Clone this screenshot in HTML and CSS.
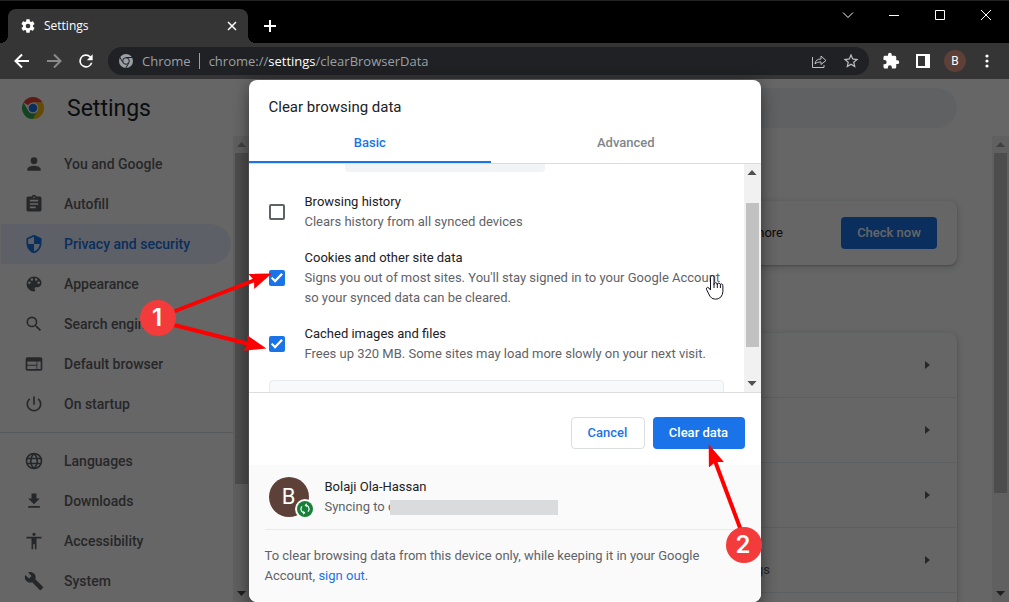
FILE: index.html
```
<!DOCTYPE html>
<html lang="en">
<head>
  <meta charset="UTF-8">
  <meta name="viewport" content="width=device-width, initial-scale=1.0">
  <title>Settings</title>
  <link rel="stylesheet" href="styles.css">
</head>
<body>
  <header class="tabstrip">
    <div class="tab">
      <svg class="icon16" viewBox="0 0 24 24"><path d="M19.43 12.98c.04-.32.07-.64.07-.98s-.03-.66-.07-.98l2.11-1.65c.19-.15.24-.42.12-.64l-2-3.46c-.12-.22-.39-.3-.61-.22l-2.49 1c-.52-.4-1.08-.73-1.69-.98l-.38-2.65A.49.49 0 0 0 14 2h-4c-.25 0-.46.18-.49.42l-.38 2.65c-.61.25-1.17.59-1.69.98l-2.49-1c-.23-.09-.49 0-.61.22l-2 3.46c-.13.22-.07.49.12.64l2.11 1.65c-.04.32-.07.65-.07.98s.03.66.07.98l-2.11 1.65c-.19.15-.24.42-.12.64l2 3.46c.12.22.39.3.61.22l2.49-1c.52.4 1.08.73 1.69.98l.38 2.65c.03.24.24.42.49.42h4c.25 0 .46-.18.49-.42l.38-2.65c.61-.25 1.17-.59 1.69-.98l2.49 1c.23.09.49 0 .61-.22l2-3.46c.12-.22.07-.49-.12-.64l-2.11-1.65zM12 15.5a3.5 3.5 0 1 1 0-7 3.5 3.5 0 0 1 0 7z"/></svg>
      <span class="tab-title">Settings</span>
      <button class="tab-close" aria-label="Close tab"><svg width="10" height="10" viewBox="0 0 10 10"><path d="M1 1l8 8M9 1L1 9"/></svg></button>
    </div>
    <button class="new-tab" aria-label="New tab"><svg width="12" height="12" viewBox="0 0 12 12"><path class="line2" d="M6 0v12M0 6h12"/></svg></button>
    <div class="win-buttons">
      <button aria-label="Search tabs"><svg width="12" height="12" viewBox="0 0 12 12"><path class="line1" d="M1 3.5l5 5 5-5"/></svg></button>
      <button aria-label="Minimize"><svg width="10" height="10" viewBox="0 0 10 10"><path class="line1" d="M0 5.5h10"/></svg></button>
      <button aria-label="Maximize"><svg width="10" height="10" viewBox="0 0 10 10"><path class="line1" d="M.5.5h9v9h-9z"/></svg></button>
      <button aria-label="Close"><svg width="10" height="10" viewBox="0 0 10 10"><path class="line1" d="M0 0l10 10M10 0L0 10"/></svg></button>
    </div>
  </header>

  <nav class="toolbar">
    <button aria-label="Back"><svg width="20" height="20" viewBox="0 0 20 20"><path class="line2" d="M17 10H4M10 3.5L3.5 10l6.5 6.5"/></svg></button>
    <button class="disabled" aria-label="Forward"><svg width="20" height="20" viewBox="0 0 20 20"><path class="line2" d="M3 10h13M10 3.5l6.5 6.5-6.5 6.5"/></svg></button>
    <button aria-label="Reload"><svg width="20" height="20" viewBox="0 0 24 24"><path d="M17.65 6.35A8 8 0 1 0 19.73 14h-2.08A6 6 0 1 1 12 6c1.66 0 3.14.69 4.22 1.78L13 11h7V4l-2.35 2.35z"/></svg></button>
    <div class="omnibox">
      <svg class="site-icon" viewBox="0 0 16 16"><circle cx="8" cy="8" r="7"/><path class="cut" d="M8 4.5h7M5 9.7L1.6 3.9M11 9.7L7.5 15.5"/><circle class="ring" cx="8" cy="8" r="3.3"/></svg>
      <span class="scheme">Chrome</span>
      <span class="url">chrome://<b>settings</b>/clearBrowserData</span>
      <button aria-label="Share"><svg width="16" height="16" viewBox="0 0 16 16"><path class="line1" d="M1.5 4v10.5h11.500V12M4 11c.3-3.600 2.500-5 6-5V3l5 4.500-5 4V9C7 9 5.300 9.500 4 11z"/></svg></button>
      <button aria-label="Bookmark"><svg width="18" height="18" viewBox="0 0 24 24"><path d="M22 9.24l-7.19-.62L12 2 9.19 8.63 2 9.24l5.46 4.73L5.82 21 12 17.27 18.18 21l-1.63-7.03L22 9.24zM12 15.4l-3.76 2.27 1-4.28-3.32-2.88 4.38-.38L12 6.1l1.71 4.04 4.38.38-3.32 2.88 1 4.28L12 15.4z"/></svg></button>
    </div>
    <button aria-label="Extensions"><svg width="18" height="18" viewBox="0 0 24 24"><path d="M20.5 11H19V7a2 2 0 0 0-2-2h-4V3.5a2.5 2.5 0 0 0-5 0V5H4c-1.1 0-2 .9-2 2v3.8h1.5a2.7 2.7 0 0 1 0 5.4H2V20c0 1.1.9 2 2 2h3.8v-1.5a2.7 2.7 0 0 1 5.4 0V22H17a2 2 0 0 0 2-2v-4h1.5a2.5 2.5 0 0 0 0-5z"/></svg></button>
    <button aria-label="Side panel"><svg width="14" height="14" viewBox="0 0 14 14"><path d="M0 0h14v14H0zM2 2v10h7V2z" fill-rule="evenodd"/></svg></button>
    <button aria-label="Profile"><span class="profile">B</span></button>
    <button aria-label="Menu"><svg width="4" height="14" viewBox="0 0 4 14"><circle cx="2" cy="2" r="1.6"/><circle cx="2" cy="7" r="1.6"/><circle cx="2" cy="12" r="1.6"/></svg></button>
  </nav>

  <div class="page">
    <div class="page-header">
      <svg class="logo" viewBox="0 0 24 24">
        <path fill="#ea4335" d="M12 12L2.470 6.500A11 11 0 0 1 21.530 6.500H12z"/>
        <path fill="#fbbc04" d="M12 6.500h9.530A11 11 0 0 1 12 23l4.760-8.250z"/>
        <path fill="#34a853" d="M2.470 6.500A11 11 0 0 0 12 23l4.760-8.250-9.520 0z"/>
        <circle cx="12" cy="12" r="5.5" fill="#fff"/><circle cx="12" cy="12" r="4.3" fill="#1a73e8"/>
      </svg>
      <h1>Settings</h1>
      <input class="search" type="search" aria-label="Search settings">
    </div>

    <div class="columns">
      <nav class="sidebar">
        <a href="#"><svg viewBox="0 0 24 24"><path d="M12 12a4 4 0 1 0 0-8 4 4 0 0 0 0 8zm0 2c-2.67 0-8 1.34-8 4v2h16v-2c0-2.66-5.33-4-8-4z"/></svg>You and Google</a>
        <a href="#"><svg viewBox="0 0 24 24"><path d="M19 3h-4.18a3 3 0 0 0-5.64 0H5a2 2 0 0 0-2 2v14c0 1.1.9 2 2 2h14a2 2 0 0 0 2-2V5a2 2 0 0 0-2-2zm-7 0a1 1 0 1 1 0 2 1 1 0 0 1 0-2zm2 14H7v-2h7v2zm3-4H7v-2h10v2zm0-4H7V7h10v2z"/></svg>Autofill</a>
        <a href="#" class="selected"><svg viewBox="0 0 24 24"><path d="M12 1L3 5v6c0 5.55 3.84 10.74 9 12 5.16-1.26 9-6.45 9-12V5l-9-4zm0 10.99h7c-.53 4.12-3.28 7.79-7 8.94V12H5V6.3l7-3.11v8.8z"/></svg>Privacy and security</a>
        <a href="#"><svg viewBox="0 0 24 24"><path d="M12 3a9 9 0 0 0 0 18 1.5 1.5 0 0 0 1.11-2.51A1.49 1.49 0 0 1 14.23 16H16a5 5 0 0 0 5-5c0-4.42-4.03-8-9-8zm-5.5 9a1.5 1.5 0 1 1 0-3 1.5 1.5 0 0 1 0 3zm3-4a1.5 1.5 0 1 1 0-3 1.5 1.5 0 0 1 0 3zm5 0a1.5 1.5 0 1 1 0-3 1.5 1.5 0 0 1 0 3zm3 4a1.5 1.5 0 1 1 0-3 1.5 1.5 0 0 1 0 3z"/></svg>Appearance</a>
        <a href="#"><svg viewBox="0 0 24 24"><path d="M15.5 14h-.79l-.28-.27A6.47 6.47 0 0 0 16 9.5 6.5 6.5 0 1 0 9.5 16c1.61 0 3.09-.59 4.23-1.57l.27.28v.79l5 4.99L20.49 19l-4.99-5zm-6 0a4.5 4.5 0 1 1 0-9 4.5 4.5 0 0 1 0 9z"/></svg>Search engine</a>
        <a href="#"><svg viewBox="0 0 24 24"><path d="M20 4H4a2 2 0 0 0-1.99 2L2 18c0 1.1.9 2 2 2h16a2 2 0 0 0 2-2V6a2 2 0 0 0-2-2zm-5 14H4v-4h11v4zm0-5H4V9h11v4zm5 5h-4V9h4v9z"/></svg>Default browser</a>
        <a href="#"><svg viewBox="0 0 24 24"><path d="M13 3h-2v10h2V3zm4.83 2.17l-1.42 1.42A6.92 6.92 0 0 1 19 12a7 7 0 1 1-11.42-5.42L6.17 5.17A9 9 0 1 0 21 12a8.95 8.95 0 0 0-3.17-6.83z"/></svg>On startup</a>
        <hr>
        <a href="#"><svg viewBox="0 0 24 24"><path class="stroke" d="M12 3a9 9 0 1 0 0 18 9 9 0 1 0 0-18zm0 0c-5.3 5-5.3 13 0 18 5.3-5 5.3-13 0-18zM3.5 9h17M3.5 15h17"/></svg>Languages</a>
        <a href="#"><svg viewBox="0 0 24 24"><path d="M19 9h-4V3H9v6H5l7 7 7-7zM5 18v2h14v-2H5z"/></svg>Downloads</a>
        <a href="#"><svg viewBox="0 0 24 24"><path d="M12 2a2 2 0 1 1 0 4 2 2 0 0 1 0-4zm9 7h-6v13h-2v-6h-2v6H9V9H3V7h18v2z"/></svg>Accessibility</a>
        <a href="#"><svg viewBox="0 0 24 24"><path d="M22.7 19l-9.1-9.1c.9-2.3.4-5-1.5-6.900-2-2-5-2.400-7.400-1.300L9 6 6 9 1.600 4.700C.4 7.100.9 10.100 2.900 12.100c1.900 1.900 4.600 2.400 6.900 1.500l9.100 9.100c.4.4 1 .4 1.400 0l2.300-2.300c.5-.4.5-1.100.1-1.400z"/></svg>System</a>
      </nav>
      <div class="scrollbar side-scroll"><i class="up off"></i><i class="thumb"></i><i class="down"></i></div>

      <main>
        <section class="card safety">
          <span>and more</span>
          <button class="primary">Check now</button>
        </section>
        <section class="card list">
          <a href="#" aria-label="Clear browsing data"></a>
          <a href="#" aria-label="Cookies and other site data"></a>
          <a href="#" aria-label="Security"></a>
          <a href="#"><span>settings</span></a>
          <a href="#" aria-label="Privacy Sandbox"></a>
        </section>
      </main>
      <div class="scrollbar main-scroll"><i class="up off"></i><i class="thumb"></i><i class="down"></i></div>
    </div>

    <div class="backdrop">
      <div class="dialog" role="dialog" aria-labelledby="dialogTitle">
        <h2 id="dialogTitle">Clear browsing data</h2>
        <div class="dialog-tabs">
          <button class="basic active">Basic</button>
          <button class="advanced">Advanced</button>
        </div>
        <div class="dialog-body">
          <div class="options">
            <div class="time-range"></div>
            <div class="option">
              <input type="checkbox" id="history">
              <label for="history">Browsing history<small>Clears history from all synced devices</small></label>
            </div>
            <div class="option">
              <input type="checkbox" id="cookies" checked>
              <label for="cookies">Cookies and other site data<small>Signs you out of most sites. You'll stay signed in to your Google Account so your synced data can be cleared.</small></label>
            </div>
            <div class="option">
              <input type="checkbox" id="cache" checked>
              <label for="cache">Cached images and files<small>Frees up 320 MB. Some sites may load more slowly on your next visit.</small></label>
            </div>
            <div class="notice"></div>
          </div>
          <div class="scrollbar dialog-scroll"><i class="up"></i><i class="thumb"></i><i class="down"></i></div>
        </div>
        <div class="actions">
          <button class="secondary">Cancel</button>
          <button class="primary">Clear data</button>
        </div>
        <div class="account">
          <div class="user">
            <div class="avatar">B
              <svg class="sync" viewBox="0 0 20 20"><circle cx="10" cy="10" r="10" fill="#fafafa"/><circle cx="10" cy="10" r="8" fill="#188038"/><path d="M8.500 13.700A4 4 0 0 1 7 7.300M11.500 6.300A4 4 0 0 1 13 12.700" fill="none" stroke="#fff" stroke-width="1.200"/><path d="M11.800 4.300v4L9.600 6.300zM8.200 11.700v4l2.200-2z" fill="#fff"/></svg>
            </div>
            <div>
              <div>Bolaji Ola-Hassan</div>
              <div class="email">Syncing to c<span class="redacted"></span></div>
            </div>
          </div>
          <p>To clear browsing data from this device only, while keeping it in your Google Account, <a href="#">sign out</a>.</p>
        </div>
      </div>
    </div>
  </div>

  <!-- step markers and pointer -->
  <svg class="marks" width="1009" height="602" viewBox="0 0 1009 602">
    <defs>
      <marker id="head" markerUnits="userSpaceOnUse" markerWidth="22" markerHeight="16" refX="4" refY="8" orient="auto">
        <path d="M22 8L0 0l3 8-3 8z" fill="#f00"/>
      </marker>
    </defs>
    <path class="arrow" d="M170 313L255 280"/>
    <path class="arrow" d="M170 324L249 344"/>
    <path class="arrow" d="M742 533L715 461"/>
    <circle cx="158" cy="318" r="18"/>
    <circle cx="744" cy="545" r="18"/>
    <text x="157" y="326">1</text>
    <text x="743" y="553">2</text>
    <path class="hand" d="M710.5 290v-12.5q0-2 1.700-2t1.800 2v7q0-1.800 1.600-1.800t1.700 1.800q.1-1.400 1.500-1.400t1.600 1.600q.3-1 1.300-.8 1.200.3 1.200 2v5.600q0 3-2.200 5.700-2.300 2-5.200 2-4 0-5.600-3l-3.400-6.800q-.4-1.700.9-2 1.600 0 3.100 2.600zM714 284v4M717.300 284v4M720.400 285v3"/>
  </svg>
</body>
</html>
```
FILE: styles.css
```
* {
  box-sizing: border-box;
}
body {
  margin: 0;
  height: 100vh;
  display: flex;
  flex-direction: column;
  overflow: hidden;
  font-family: Roboto, "Liberation Sans", sans-serif;
  font-size: 13px;
  line-height: 20px;
  color: #202124;
}
button {
  font: inherit;
  color: inherit;
  background: none;
  border: none;
  padding: 0;
  cursor: pointer;
}
svg {
  display: block;
  fill: currentColor;
}
.line1, .line2, .stroke {
  fill: none;
  stroke: currentColor;
}
.line2, .stroke { stroke-width: 2; }

/* window frame */
.tabstrip {
  display: flex;
  height: 43px;
  background: #000;
  border-top: 1px solid #222;
  color: #fff;
  font-family: "Open Sans", sans-serif;
  font-size: 12px;
}
.tab {
  position: relative;
  display: flex;
  align-items: center;
  gap: 8px;
  width: 240px;
  margin: 8px 0 0 8px;
  padding: 0 11px 0 12px;
  background: #353535;
  border-radius: 8px 8px 0 0;
}
.tab::before, .tab::after {
  content: "";
  position: absolute;
  bottom: 0;
  width: 8px;
  height: 8px;
}
.tab::before {
  left: -8px;
  background: radial-gradient(circle at 0 0, #000 8px, #353535 8px);
}
.tab::after {
  right: -8px;
  background: radial-gradient(circle at 100% 0, #000 8px, #353535 8px);
}
.icon16 {
  width: 16px;
  height: 16px;
}
.tab-title { flex: 1; }
.tab-close path {
  stroke: #fff;
  stroke-width: 1.5;
}
.new-tab {
  margin: 8px 0 0 16px;
}
.win-buttons {
  display: flex;
  height: 28px;
  margin-left: auto;
}
.win-buttons button {
  width: 46px;
}
.win-buttons svg, .toolbar button svg { margin: auto; }

.toolbar {
  display: flex;
  align-items: center;
  height: 36px;
  padding: 0 6px;
  background: #353535;
  color: #fff;
}
.toolbar button {
  width: 32px;
}
.toolbar .disabled { color: #8a8a8a; }
.omnibox {
  flex: 1;
  display: flex;
  align-items: center;
  height: 28px;
  margin: 0 6px;
  padding: 0 2px 0 10px;
  border-radius: 14px;
  background: #202124;
  color: #9aa0a6;
  font-family: "Open Sans", sans-serif;
  font-size: 13px;
}
.omnibox button { color: #bdc1c6; }
.site-icon {
  width: 16px;
  height: 16px;
}
.site-icon .cut, .site-icon .ring {
  stroke: #202124;
}
.scheme {
  margin-left: 8px;
  padding-right: 8px;
  line-height: 16px;
  border-right: 1px solid #9aa0a6;
}
.url {
  flex: 1;
  margin-left: 9px;
}
.url b {
  font-weight: 400;
  color: #fff;
}
.profile {
  display: block;
  width: 22px;
  height: 22px;
  margin: auto;
  border-radius: 50%;
  background: #5d4037;
  font-size: 12px;
  line-height: 22px;
  text-align: center;
}

/* settings page */
.page {
  position: relative;
  flex: 1;
  min-height: 0;
  display: flex;
  flex-direction: column;
}
.page-header {
  display: flex;
  align-items: center;
  height: 57px;
  padding: 0 52px 0 21px;
}
.logo {
  width: 24px;
  height: 24px;
}
h1 {
  margin: 0 128px 0 22px;
  padding-top: 2px;
  font-size: 23px;
  font-weight: 400;
}
.search {
  flex: 1;
  height: 40px;
  border: none;
  border-radius: 20px;
  background: #f1f3f4;
}
.columns {
  flex: 1;
  min-height: 0;
  display: flex;
}
.sidebar {
  width: 233px;
  padding-top: 8px;
  overflow: hidden;
}
.sidebar a {
  display: flex;
  align-items: center;
  gap: 20px;
  height: 40px;
  margin: 0 2px 0 1px;
  padding-left: 23px;
  border-radius: 0 20px 20px 0;
  color: #5f6368;
  font-size: 14px;
  font-weight: 500;
  text-decoration: none;
}
.sidebar a.selected {
  background: #e8f0fe;
  color: #1a73e8;
}
.sidebar svg {
  width: 20px;
  height: 20px;
}
.sidebar hr {
  margin: 8px 0;
  border: none;
  border-top: 1px solid #dadce0;
}

.scrollbar {
  display: flex;
  flex-direction: column;
  align-items: center;
  width: 17px;
  background: #f1f1f1;
}
.scrollbar i {
  width: 13px;
}
.up, .down {
  height: 17px;
  background: #505050;
  clip-path: polygon(15% 65%, 50% 35%, 85% 65%);
}
.down {
  margin-top: auto;
  clip-path: polygon(15% 35%, 50% 65%, 85% 35%);
}
.off { background: #a3a3a3; }
.thumb { background: #c1c1c1; }
.side-scroll .thumb { height: 71%; }
.main-scroll .thumb { height: 73%; }
.dialog-scroll .thumb {
  height: 63%;
  margin-top: 22px;
}

main {
  flex: 1;
  padding: 65px 35px 0 28px;
  overflow: hidden;
}
.card {
  border-radius: 8px;
  box-shadow: 0 1px 2px rgba(60, 64, 67, .3), 0 2px 6px 2px rgba(60, 64, 67, .15);
}
.safety {
  display: flex;
  align-items: center;
  justify-content: flex-end;
  gap: 58px;
  height: 64px;
  margin-bottom: 68px;
  padding-right: 20px;
}
.safety .primary {
  width: 96px;
}
.list a {
  display: flex;
  align-items: center;
  justify-content: flex-end;
  height: 65px;
  padding-right: 27px;
  border-bottom: 1px solid #e8eaed;
  color: #5f6368;
  text-decoration: none;
}
.list a::after {
  content: "";
  width: 5px;
  height: 8px;
  background: #5f6368;
  clip-path: polygon(0 0, 100% 50%, 0 100%);
}
.list span {
  padding: 20px 155px 0 0;
}

/* dialog */
.backdrop {
  position: absolute;
  inset: 0;
  display: flex;
  justify-content: center;
  padding-top: 1px;
  background: rgba(0, 0, 0, .6);
}
.dialog {
  display: flex;
  flex-direction: column;
  width: 512px;
  border-radius: 8px;
  overflow: hidden;
  background: #fff;
  box-shadow: 0 0 16px rgba(0, 0, 0, .3), 0 16px 16px rgba(0, 0, 0, .24);
}
h2 {
  margin: 0;
  padding: 17px 20px 5px;
  font-size: 15px;
  font-weight: 400;
}
.dialog-tabs {
  display: flex;
  height: 42px;
  border-bottom: 1px solid #dadce0;
}
.dialog-tabs button {
  padding-top: 2px;
  border-bottom: 2px solid transparent;
  font-weight: 500;
  color: #80868b;
}
.basic { flex: 9; }
.advanced { flex: 10; }
.dialog-tabs .active {
  border-color: #1a73e8;
  color: #1a73e8;
}
.dialog-body {
  flex: 1;
  min-height: 0;
  display: flex;
  border-bottom: 1px solid #dadce0;
}
.options {
  flex: 1;
  padding: 0 20px;
  overflow: hidden;
}
.time-range {
  width: 200px;
  height: 8px;
  margin: 0 0 20px 76px;
  border-radius: 0 0 4px 4px;
  background: #f1f3f4;
}
.option {
  display: flex;
  align-items: center;
  gap: 20px;
  margin-bottom: 16px;
}
.option small {
  display: block;
  font-size: 13px;
  color: #5f6368;
}
.option input {
  appearance: none;
  flex: none;
  width: 16px;
  height: 16px;
  margin: 0;
  border: 2px solid #5f6368;
  border-radius: 2px;
}
.option input:checked {
  border: none;
  background: #1a73e8;
}
.option input:checked::before {
  content: "";
  display: block;
  height: 16px;
  background: #fff;
  clip-path: polygon(15% 52%, 24% 43%, 41% 60%, 80% 19%, 90% 28%, 41% 79%);
}
.notice {
  height: 60px;
  border: 1px solid #e8eaed;
  border-radius: 4px;
  background: #f8f9fa;
}
.actions {
  display: flex;
  justify-content: flex-end;
  gap: 8px;
  padding: 24px 16px 16px;
}
.primary, .secondary {
  width: 92px;
  height: 32px;
  border-radius: 4px;
  background: #1a73e8;
  color: #fff;
  font-weight: 500;
}
.secondary {
  width: 74px;
  border: 1px solid #dadce0;
  background: #fff;
  color: #1a73e8;
}
.account {
  background: #fafafa;
}
.user {
  display: flex;
  gap: 16px;
  margin: 0 16px;
  padding: 12px 4px;
  border-bottom: 1px solid #e8eaed;
}
.avatar {
  position: relative;
  width: 40px;
  height: 40px;
  border-radius: 50%;
  background: #5d4037;
  color: #fff;
  font-size: 22px;
  line-height: 40px;
  text-align: center;
}
.sync {
  position: absolute;
  right: -6px;
  bottom: -2px;
  width: 20px;
  height: 20px;
}
.email {
  display: flex;
  align-items: center;
  color: #5f6368;
}
/* covers the address */
.redacted {
  width: 168px;
  height: 15px;
  margin-left: -5px;
  background: #dadbdd;
}
.account p {
  margin: 0;
  padding: 16px;
  color: #5f6368;
}
.account a {
  color: #1a73e8;
  text-decoration: none;
}

/* step markers */
.marks {
  position: absolute;
  top: 0;
  left: 0;
  pointer-events: none;
}
.marks circle { fill: #f33b3b; }
.marks text {
  fill: #fff;
  font: 600 24px Inter, sans-serif;
  text-anchor: middle;
}
.arrow {
  stroke: #f00;
  stroke-width: 4;
  marker-end: url(#head);
}
.hand {
  fill: #fff;
  stroke: #112;
}
```
